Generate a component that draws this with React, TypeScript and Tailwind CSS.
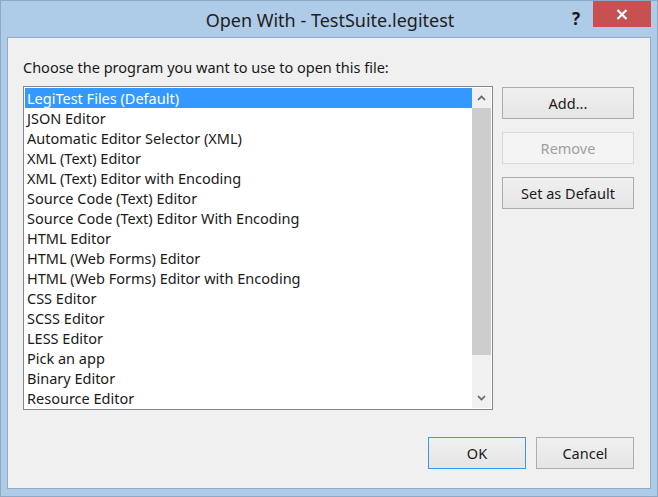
import React from "react";

const items = [
  "LegiTest Files (Default)",
  "JSON Editor",
  "Automatic Editor Selector (XML)",
  "XML (Text) Editor",
  "XML (Text) Editor with Encoding",
  "Source Code (Text) Editor",
  "Source Code (Text) Editor With Encoding",
  "HTML Editor",
  "HTML (Web Forms) Editor",
  "HTML (Web Forms) Editor with Encoding",
  "CSS Editor",
  "SCSS Editor",
  "LESS Editor",
  "Pick an app",
  "Binary Editor",
  "Resource Editor",
];

const font = { fontFamily: '"Noto Sans", "Open Sans", sans-serif' };

function Btn({ children, disabled, def, className }: { children: React.ReactNode; disabled?: boolean; def?: boolean; className?: string }) {
  return (
    <div
      className={
        "flex items-center justify-center h-[32px] pt-[1px] text-[14.5px] " +
        (disabled
          ? "border border-[#d9d9d9] bg-[#f4f4f4] text-[#a0a0a0] "
          : def
          ? "border border-[#3399ff] bg-gradient-to-b from-[#f0f0f0] to-[#e5e5e5] text-[#1a1a1a] "
          : "border border-[#adadad] bg-gradient-to-b from-[#f0f0f0] to-[#e5e5e5] text-[#1a1a1a] ") +
        (className ?? "")
      }
    >
      {children}
    </div>
  );
}

export default function App() {
  return (
    <div className="w-[658px] h-[497px] bg-white" style={font}>
      <div className="w-[658px] h-[497px] bg-[#aecbe8] border border-[#8ea9c8] flex flex-col">
        <div className="h-[36px] flex items-start relative">
          <div className="flex-1 text-center text-[18px] text-[#1e1e1e] pt-[6px] pl-[2px]">Open With - TestSuite.legitest</div>
          <div className="absolute right-[77px] top-[5px] text-[17px] font-bold text-[#1a1a1a]">?</div>
          <div className="absolute right-[6px] top-0 w-[58px] h-[26px] bg-[#c75050] flex items-center justify-center">
            <svg width="12" height="11" viewBox="0 0 12 11">
              <path d="M1.5 1 L10.5 10 M10.5 1 L1.5 10" stroke="white" strokeWidth="2.2" />
            </svg>
          </div>
        </div>
        <div className="mx-[6px] border border-[#92abc8] bg-[#f0f0f0] h-[452px] flex flex-col pl-[15px] pr-[16px]">
          <div className="text-[14.5px] text-[#1a1a1a] h-[20px] leading-[20px] mt-[19px]">
            Choose the program you want to use to open this file:
          </div>
          <div className="flex mt-[9px] gap-[9px]">
            <div className="w-[470px] shrink-0 h-[324px] border border-[#828790] bg-white p-[1px] flex">
              <div className="flex-1 flex flex-col">
                {items.map((t, i) => (
                  <div
                    key={t}
                    className={
                      "h-[20px] leading-[20px] pl-[2px] text-[14.5px] whitespace-nowrap " +
                      (i === 0 ? "bg-[#3399ff] text-white" : "text-[#1a1a1a]")
                    }
                  >
                    {t}
                  </div>
                ))}
              </div>
              <div className="w-[19px] bg-[#f0f0f0] flex flex-col">
                <div className="h-[20px] flex items-center justify-center">
                  <svg width="9" height="6" viewBox="0 0 9 6">
                    <path d="M1 5 L4.5 1.5 L8 5" stroke="#606060" strokeWidth="1.6" fill="none" />
                  </svg>
                </div>
                <div className="h-[247px] bg-[#cdcdcd]" />
                <div className="flex-1" />
                <div className="h-[20px] flex items-center justify-center">
                  <svg width="9" height="6" viewBox="0 0 9 6">
                    <path d="M1 1 L4.5 4.5 L8 1" stroke="#606060" strokeWidth="1.6" fill="none" />
                  </svg>
                </div>
              </div>
            </div>
            <div className="w-[132px] shrink-0 flex flex-col gap-[13px] pt-[1px]">
              <Btn>Add...</Btn>
              <Btn disabled>Remove</Btn>
              <Btn>Set as Default</Btn>
            </div>
          </div>
          <div className="flex justify-end gap-[10px] mt-[27px]">
            <Btn def className="w-[98px]">OK</Btn>
            <Btn className="w-[98px]">Cancel</Btn>
          </div>
        </div>
      </div>
    </div>
  );
}
